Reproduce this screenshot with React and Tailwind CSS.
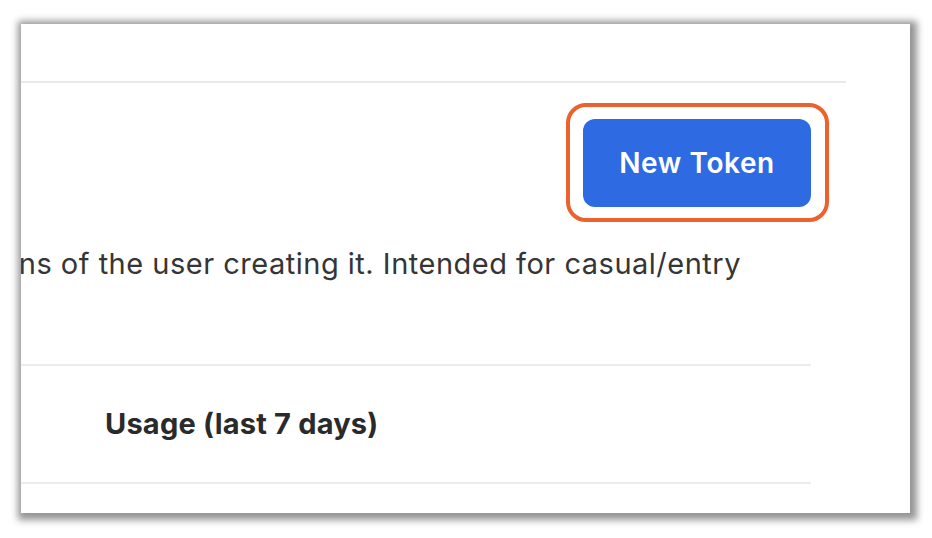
import React from "react";

export default function App() {
  return (
    <div className="w-[932px] h-[538px] bg-white overflow-hidden pt-[24px] pl-[21px]">
      {/* Card */}
      <div
        className="w-[889px] h-[489px] bg-white overflow-hidden flex flex-col shadow-[2px_2px_7px_5px_rgba(0,0,0,0.42)]"
        style={{ fontFamily: "Inter, 'Noto Sans', sans-serif" }}
      >
        {/* Top bar */}
        <div className="h-[57px] shrink-0" />
        <div className="h-[2px] w-[825px] bg-[#e9e9e9] shrink-0" />

        {/* Header row */}
        <div className="w-[790px] flex justify-end pt-[36px] shrink-0">
          <div className="relative">
            <button className="w-[228px] h-[88px] rounded-[12px] bg-[#2e6be3] text-white text-[28px] font-semibold tracking-[0.6px]">
              New Token
            </button>
            {/* highlight ring */}
            <div className="absolute -top-[16px] -left-[17px] -right-[18px] -bottom-[15px] border-[4px] border-[#eb622d] rounded-[20px] pointer-events-none" />
          </div>
        </div>

        {/* Description */}
        <div className="mt-[37px] h-[40px] w-[790px] overflow-hidden relative shrink-0">
          <p className="absolute right-[70px] top-0 whitespace-nowrap text-[29px] leading-[40px] tracking-[0.5px] text-[#353535]">
            Inherits the permissions of the user creating it. Intended for casual/entry
          </p>
        </div>

        {/* Table header */}
        <div className="mt-[80px] h-[2px] w-[790px] bg-[#ebebeb] shrink-0" />
        <div className="h-[116px] w-[790px] flex items-center pl-[84px] shrink-0">
          <span className="text-[29px] font-bold text-[#2a2a2a] tracking-[0.2px]">Usage (last 7 days)</span>
        </div>
        <div className="h-[2px] w-[790px] bg-[#ebebeb] shrink-0" />
      </div>
    </div>
  );
}
